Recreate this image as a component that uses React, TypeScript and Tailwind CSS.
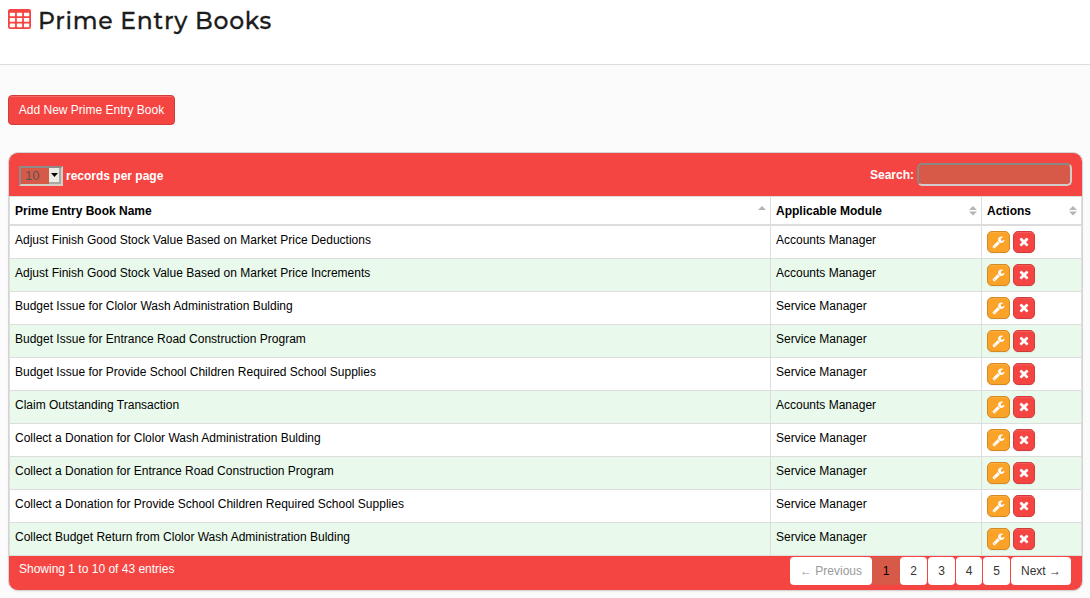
import React from "react";

const entries: [string, string][] = [
  ["Adjust Finish Good Stock Value Based on Market Price Deductions", "Accounts Manager"],
  ["Adjust Finish Good Stock Value Based on Market Price Increments", "Accounts Manager"],
  ["Budget Issue for Clolor Wash Administration Bulding", "Service Manager"],
  ["Budget Issue for Entrance Road Construction Program", "Service Manager"],
  ["Budget Issue for Provide School Children Required School Supplies", "Service Manager"],
  ["Claim Outstanding Transaction", "Accounts Manager"],
  ["Collect a Donation for Clolor Wash Administration Bulding", "Service Manager"],
  ["Collect a Donation for Entrance Road Construction Program", "Service Manager"],
  ["Collect a Donation for Provide School Children Required School Supplies", "Service Manager"],
  ["Collect Budget Return from Clolor Wash Administration Bulding", "Service Manager"],
];

const columns = "grid grid-cols-[761px_211px_100px]";

function TableIcon() {
  return (
    <svg viewBox="0 0 1664 1408" className="mt-[9px] h-5 w-[23px] shrink-0" preserveAspectRatio="none">
      <rect width="1664" height="1408" rx="160" fill="#f54542" />
      {[256, 640, 1024].map((y) =>
        [128, 640, 1152].map((x) => (
          <rect key={`${x}-${y}`} x={x} y={y} width="384" height="256" rx="32" fill="#fff" />
        )),
      )}
    </svg>
  );
}

function WrenchIcon() {
  return (
    <svg viewBox="0 64 1792 1792" className="h-[13px] w-[13px] fill-white">
      <path d="M448 1472q0-26-19-45t-45-19-45 19-19 45 19 45 45 19 45-19 19-45zm644-420l-682 682q-37 37-90 37-52 0-91-37l-106-108q-38-36-38-90 0-53 38-91l681-681q39 98 114.500 173.500t173.500 114.500zm634-435q0 39-23 106-47 134-164.500 217.500t-258.500 83.500q-185 0-316.500-131.500t-131.500-316.500 131.500-316.500 316.500-131.500q58 0 121.500 16.500t107.500 46.500q16 11 16 28t-16 28l-293 169v224l193 107q5-3 79-48.500t135.500-81 70.500-35.500q15 0 23.500 10t8.500 25z" />
    </svg>
  );
}

function TimesIcon() {
  return (
    <svg viewBox="64 124 1664 1664" className="h-3 w-3 fill-white">
      <path d="M1490 1322q0 40-28 68l-136 136q-28 28-68 28t-68-28l-294-294-294 294q-28 28-68 28t-68-28l-136-136q-28-28-28-68t28-68l294-294-294-294q-28-28-28-68t28-68l136-136q28-28 68-28t68 28l294 294 294-294q28-28 68-28t68 28l136 136q28 28 28 68t-28 68l-294 294 294 294q28 28 28 68z" />
    </svg>
  );
}

function SortIcon({ ascending = false }: { ascending?: boolean }) {
  return (
    <svg viewBox="0 0 8 10" className="mt-[9px] h-2.5 w-2 fill-[#b5b5b5]">
      <path d="M4 0 8 4H0z" />
      {!ascending && <path d="M0 5.500H8L4 9.500z" />}
    </svg>
  );
}

function HeaderCell({ label, ascending, last }: { label: string; ascending?: boolean; last?: boolean }) {
  return (
    <div className={`flex justify-between pl-[5px] ${last ? "pr-[5px]" : "border-r border-[#dddddd] pr-[4.5px]"}`}>
      <span className="leading-7">{label}</span>
      <SortIcon ascending={ascending} />
    </div>
  );
}

const actionButton =
  "flex h-[22px] items-center justify-center rounded-[5px] border shadow-[inset_0_1px_0_rgba(255,255,255,0.12),0_1px_1px_rgba(0,0,0,0.05)]";
const pageButton = "flex h-7 items-center justify-center rounded bg-white";

export default function App() {
  return (
    <div className="h-[598px] w-[1090px] overflow-hidden bg-[#fbfbfb] font-['Liberation_Sans',Arial,sans-serif] text-xs text-black">
      <header className="flex h-[65px] items-start gap-[7px] border-b border-[#dddddd] bg-white pl-2">
        <TableIcon />
        <h1 className="origin-center scale-y-[1.06] whitespace-nowrap font-['Montserrat','Inter',sans-serif] text-[23.5px] font-medium leading-[39px] tracking-[0.7px] text-[#1c1c1c] [-webkit-text-stroke:0.25px_#1c1c1c]">
          Prime Entry Books
        </h1>
      </header>

      <main className="px-2 pt-[30px]">
        <button className="flex h-[30px] w-[167px] items-center justify-center rounded border border-[#cf3c3a] bg-[#f54542] text-white shadow-[inset_0_1px_0_rgba(255,255,255,0.2)]">
          Add New Prime Entry Book
        </button>

        <section className="mt-[27px] h-[439px] w-[1075px] overflow-hidden rounded-[10px] border border-[#d5d5d5] bg-[#f54542] shadow-[0_1px_2px_rgba(0,0,0,0.06)]">
          <div className="flex h-[43px] justify-between px-2.5 pt-2.5 font-bold text-white">
            <div className="flex h-5 items-center gap-[3px] pt-[5px]">
              <div className="mt-px flex h-5 w-11 shrink-0 border-2 border-b-[#d4d0c8] border-l-[#8c8c8c] border-r-[#d4d0c8] border-t-[#8c8c8c] bg-[#d65a47] font-normal text-[#555555]">
                <span className="w-7 pl-1 text-[13px] leading-4">10</span>
                <span className="flex w-3 items-center justify-center border-b-2 border-r-2 border-[#aaa9a4] bg-[#ecebe6]">
                  <svg viewBox="0 0 7 4" className="h-1 w-[7px] fill-black"><path d="M0 0H7L3.500 4z" /></svg>
                </span>
              </div>
              <span>records per page</span>
            </div>
            <label className="flex h-[23px] items-center gap-[3px]">
              <span>Search:</span>
              <input
                aria-label="Search"
                className="h-[23px] w-[155px] rounded-[5px] border-2 border-b-[#d0cdcc] border-l-[#8c8782] border-r-[#d0cdcc] border-t-[#8c8782] bg-[#d65a47] outline-none"
              />
            </label>
          </div>

          <div className="h-[360px] border-t border-r border-l border-[#dddddd] bg-white">
            <div className={`${columns} h-[29px] border-b-2 border-[#dddddd] font-bold`}>
              <HeaderCell label="Prime Entry Book Name" ascending />
              <HeaderCell label="Applicable Module" />
              <HeaderCell label="Actions" last />
            </div>
            {entries.map(([name, module], i) => (
              <div key={name} className={`${columns} h-[33px] border-b border-[#dddddd] ${i % 2 ? "bg-[#e9f9eb]" : "bg-white"}`}>
                <div className="border-r border-[#dddddd] pl-[5px] leading-7">{name}</div>
                <div className="border-r border-[#dddddd] pl-[5px] leading-7">{module}</div>
                <div className="flex gap-[3px] pl-[5px] pt-[5px]">
                  <span className={`${actionButton} w-[23px] border-[#d38a23] bg-[#faa328]`}><WrenchIcon /></span>
                  <span className={`${actionButton} w-[22px] border-[#cf3c3a] bg-[#f54542]`}><TimesIcon /></span>
                </div>
              </div>
            ))}
          </div>

          <footer className="flex h-[34px] justify-between pl-2.5 pr-[11px] text-white">
            <span className="leading-[27px]">Showing 1 to 10 of 43 entries</span>
            <nav className="flex pt-px text-[#333333]">
              <span className={`${pageButton} w-[82px] text-[#999999]`}>← Previous</span>
              <span className="flex h-7 w-7 items-center justify-center bg-[#d65a47] text-black">1</span>
              <span className={`${pageButton} w-[27px]`}>2</span>
              <span className={`${pageButton} ml-px w-[27px]`}>3</span>
              <span className={`${pageButton} ml-px w-[26px]`}>4</span>
              <span className={`${pageButton} ml-px w-[27px]`}>5</span>
              <span className={`${pageButton} ml-px w-[60px]`}>Next →</span>
            </nav>
          </footer>
        </section>
      </main>
    </div>
  );
}
